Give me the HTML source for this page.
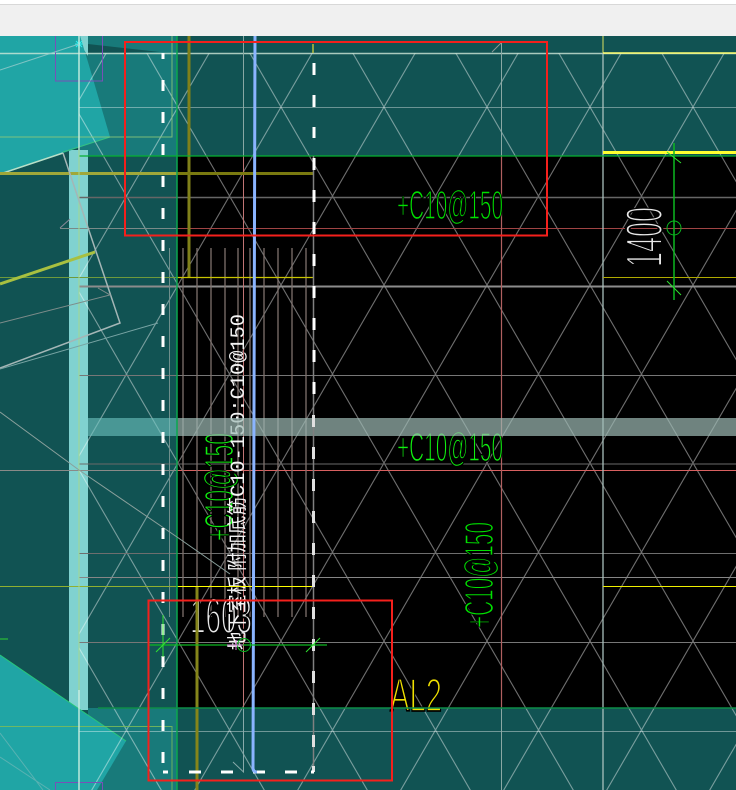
<!DOCTYPE html>
<html><head><meta charset="utf-8"><style>
html,body{margin:0;padding:0;background:#000;width:736px;height:790px;overflow:hidden}
svg{display:block}
text{font-family:"Liberation Sans","Noto Sans CJK SC",sans-serif}
</style></head><body>
<svg width="736" height="790" viewBox="0 0 736 790" xmlns="http://www.w3.org/2000/svg" shape-rendering="geometricPrecision">
<defs>
<pattern id="h" patternUnits="userSpaceOnUse" x="178" y="107" width="103" height="178">
<path d="M0 0L103 178M103 0L0 178" stroke="#fff" stroke-opacity=".43" stroke-width="1.100" fill="none"/>
</pattern>
</defs>
<!-- top bar -->
<rect width="736" height="36" fill="#f0f0f0"/>
<rect width="736" height="4" fill="#fff"/>
<rect y="4" width="736" height="1" fill="#d8d8d8"/>
<!-- base -->
<rect y="36" width="736" height="754" fill="#000"/>
<rect y="36" width="736" height="120" fill="#115353"/>
<rect y="36" width="177" height="754" fill="#115353"/>
<rect y="708" width="736" height="82" fill="#115353"/>
<!-- medium teal -->
<rect x="80" y="36" width="97" height="120" fill="#187a7a"/>
<path d="M88 44L160 52L88 53Z" fill="#115353"/>
<rect x="88" y="708" width="89" height="82" fill="#187a7a"/>
<!-- light strip -->
<rect x="69" y="150" width="19" height="560" fill="#80d2d0"/>
<path d="M80 36H88V56L84 50Z" fill="#80d2d0"/>
<!-- light polygons -->
<path d="M0 36H80L88 62L110 137L63 153L0 175Z" fill="#20a5a5"/>
<path d="M0 655L126 741L97 790H0Z" fill="#20a5a5"/>
<path d="M0 655L126 741" stroke="#28c878" stroke-width="1" fill="none"/>
<path d="M110 137L63 152" stroke="#35c080" stroke-width="1" fill="none"/>
<path d="M63 153L0 174" stroke="#b8e0c8" stroke-width="1.500" fill="none"/>
<!-- hatch -->
<rect x="79" y="53" width="657" height="737" fill="url(#h)"/>
<!-- horizontal grid -->
<g fill="none">
<path d="M0 53.500H736" stroke="#cfe8d8" stroke-opacity=".8" stroke-width="1.600"/>
<path d="M79 107.500H736" stroke="#fff" stroke-opacity=".38"/>
<path d="M79 197.500H736" stroke="#666" stroke-width="1.600"/>
<path d="M60 228.500H177" stroke="#7a8a88"/>
<path d="M177 228.500H736" stroke="#a04444"/>
<path d="M60 228L70 219" stroke="#889"/>
<path d="M79 286.500H736" stroke="#8c8c8c" stroke-width="2"/>
<path d="M79 375.500H736" stroke="#777"/>
<path d="M79 464H736" stroke="#6a6a6a"/>
<path d="M0 470.500H177" stroke="#8a8a88"/>
<path d="M177 470.500H736" stroke="#d86060"/>
<path d="M79 553.500H736" stroke="#6e6e6e"/>
<path d="M79 577.500H736" stroke="#868686"/>
<path d="M79 642.500H736" stroke="#777"/>
<path d="M79 731.500H736" stroke="#fff" stroke-opacity=".4"/>
</g>
<!-- pink / gray vertical -->
<path d="M243.500 36V156" stroke="#88a8a4" fill="none"/>
<path d="M243.500 156V708" stroke="#c07474" fill="none"/>
<path d="M243.500 708V772L233 762" stroke="#8aa" fill="none"/>
<path d="M501.500 43V156" stroke="#8aa8a4" fill="none"/>
<path d="M501.500 156V708" stroke="#b06060" stroke-width="1.200" fill="none"/>
<path d="M501.500 708V790" stroke="#8aa8a4" fill="none"/>
<path d="M492 52L501 43" stroke="#8a9a98" fill="none"/>
<path d="M603 36V790" stroke="#a8c0bc" stroke-width="1.300" fill="none"/>
<path d="M603 36V53" stroke="#b0c040" stroke-width="1" fill="none"/>
<!-- rebar verticals -->
<path d="M169.500 248V617" stroke="#6f8f8c"/>
<g stroke="#7e716d" stroke-width="1.300" fill="none">
<path d="M183 248V617M197 248V617M211 248V617M225 248V617M238 248V617M250 248V617M264 248V617M278 248V617M292 248V617M306 248V617"/>
</g>
<!-- text -->
<g stroke="#000">
<text x="397" y="219" font-size="41" textLength="106" lengthAdjust="spacingAndGlyphs" fill="#00e000" stroke-width="1.500">+C10@150</text>
<text x="397" y="461" font-size="41" textLength="106" lengthAdjust="spacingAndGlyphs" fill="#10f010" stroke-width="1.500">+C10@150</text>
<text transform="translate(493 628) rotate(-90)" font-size="41" textLength="106" lengthAdjust="spacingAndGlyphs" fill="#00e000" stroke-width="1.500">+C10@150</text>
<text transform="translate(233 541) rotate(-90)" font-size="41" textLength="108" lengthAdjust="spacingAndGlyphs" fill="#10f010" stroke-width="1.500">+C10@150</text>
<text transform="translate(662 267) rotate(-90)" font-size="52" textLength="60" lengthAdjust="spacingAndGlyphs" fill="#e8e8e8" stroke-width="2">1400</text>
<text x="190" y="633" font-size="50" textLength="62" lengthAdjust="spacingAndGlyphs" fill="#e8e8e8" stroke-width="2">1603</text>
<text x="390" y="711" font-size="46" textLength="52" lengthAdjust="spacingAndGlyphs" fill="#f0e000" stroke-width="1.800">AL2</text>
</g>
<text transform="translate(244 497) rotate(-90)" font-size="20" textLength="183" lengthAdjust="spacingAndGlyphs" fill="#f4f4f4" style="font-family:'Liberation Mono',monospace">C10-150:C10@150</text>
<text transform="translate(244 650) rotate(-90)" font-size="20" textLength="153" lengthAdjust="spacingAndGlyphs" fill="#f4f4f4">地下室板 附加底筋</text>
<!-- band over text -->
<rect x="88" y="418" width="89" height="18" fill="rgb(112,197,193)" fill-opacity=".6"/>
<rect x="177" y="418" width="559" height="18" fill="rgb(158,186,181)" fill-opacity=".7"/>
<!-- olive -->
<path d="M189 36V277" stroke="#80801a" stroke-width="3" fill="none"/>
<path d="M197 586V790" stroke="#85851a" stroke-width="3" fill="none"/>
<path d="M0 173.500H177" stroke="#a0a83a" stroke-width="3" fill="none"/>
<path d="M177 173.500H313" stroke="#7a7a10" stroke-width="3" fill="none"/>
<path d="M0 277.500H177" stroke="#6e9a3c" fill="none"/>
<path d="M177 277.500H313" stroke="#c8c400" stroke-width="1.300" fill="none"/>
<path d="M603 277.500H736" stroke="#b0aa00" fill="none"/>
<path d="M0 586.500H177" stroke="#90b030" fill="none"/>
<path d="M177 586.500H313" stroke="#ff0" fill="none"/>
<path d="M603 586.500H736" stroke="#f0f000" fill="none"/>
<path d="M603 152.500H736" stroke="#ffff30" stroke-width="3" fill="none"/>
<path d="M603 53H736" stroke="#ffff70" stroke-width="1.600" fill="none"/>
<path d="M313 44V53" stroke="#b8c040" stroke-width="1.500" fill="none"/>
<!-- green lines -->
<path d="M177 36V790" stroke="#0aa850" stroke-width="1.500" fill="none"/>
<path d="M172 36V137H0" stroke="#8cc878" fill="none" stroke-opacity=".85"/>
<path d="M172 790V726.500H0" stroke="#7cbc58" fill="none" stroke-opacity=".85"/>
<path d="M79 156H736" stroke="#06b030" stroke-width="1.300" fill="none"/>
<path d="M98 708H736" stroke="#0e8c48" stroke-width="1.500" fill="none"/>
<!-- purple rects -->
<path d="M55.500 36V81H102.500V36" stroke="#7850b8" fill="none"/>
<path d="M55.500 790V782.500H102.500V790" stroke="#7850b8" fill="none"/>
<path d="M75 44H83M79 40V48M76 41L82 47M82 41L76 47" stroke="#30f0f0" fill="none"/>
<!-- left vertical -->
<path d="M79 36V150" stroke="#cfeee0" stroke-opacity=".85" stroke-width="1.600" fill="none"/>
<path d="M79 150V690" stroke="#a4d890" stroke-opacity=".85" stroke-width="1.200" fill="none"/>
<path d="M79 690V790" stroke="#cfeee0" stroke-opacity=".85" stroke-width="1.600" fill="none"/>
<!-- left diagonal -->
<g fill="none">
<path d="M0 70L79 44" stroke="#9cc" stroke-width="1" stroke-opacity=".8"/>
<path d="M63 153L120 323L0 368" stroke="#a4b6b6" stroke-width="1.500"/>
<path d="M158 323L0 369" stroke="#78a4a4"/>
<path d="M95 252L0 284" stroke="#a8c040" stroke-width="3"/>
<path d="M0 323L110 295L98 288" stroke="#7d8c8a"/>
<path d="M0 412L79 470L177 537L230 574" stroke="#8aa09c"/>
<path d="M0 733L43 790M0 757L50 790" stroke="#70b8b8" stroke-opacity=".7"/>
</g>
<!-- dashes -->
<path d="M313.500 156V772" stroke="#808080" stroke-width="1.500" fill="none"/>
<g fill="none" stroke="#fff" stroke-width="3">
<path d="M163 53V59"/>
<path d="M163 80V91M163 112V123M163 144V155M163 176V187M163 208V219M163 240V251M163 272V283M163 304V315M163 336V347M163 368V379M163 400V411M163 432V443M163 464V475M163 496V507M163 528V539M163 560V571M163 592V603M163 624V635M163 656V667M163 688V699M163 720V731M163 752V763"/>
<path d="M314 63V75M314 95V107M314 127V138M314 158V170M314 190V202M314 222V234M314 254V266M314 286V298M314 318V330M314 350V362M314 382V394"/>
<path stroke="#e0e0e0" d="M313.500 415V427M313.500 447V459M313.500 479V491M313.500 511V523M313.500 543V555M313.500 575V587M313.500 607V619M313.500 639V651M313.500 671V683M313.500 703V715M313.500 735V747M313.500 766V772"/>
<path d="M163 772H168M189 772H201M221 772H233M253 772H265M285 772H297M311 772H314"/>
</g>
<!-- blue -->
<path d="M255 36L253 768Q253 772 257 772" stroke="#8ab4ff" stroke-width="3" fill="none"/>
<!-- dims -->
<g fill="none" stroke="#0cb820">
<path d="M674 143V300" stroke-width="1.500"/>
<circle cx="674" cy="228" r="7"/>
<path d="M667 152L681 163M667 281L681 295" stroke="#30e030"/>
<path d="M149 645H327" stroke-width="1.300"/>
<circle cx="244" cy="645" r="6.500"/>
<path d="M156 652L170 638M306 652L320 638" stroke="#30e030"/>
<path d="M163 615V657" stroke="#30e030"/>
<path d="M0 639H8" stroke="#30d030"/>
</g>
<path d="M227 645H243M236 640V650" stroke="#e080e0" fill="none"/>
<!-- red rects -->
<rect x="125" y="42" width="422" height="193.500" fill="none" stroke="#f5201c" stroke-width="2"/>
<rect x="148.500" y="600.500" width="243.500" height="180" fill="none" stroke="#f5201c" stroke-width="2"/>
</svg>
</body></html>
